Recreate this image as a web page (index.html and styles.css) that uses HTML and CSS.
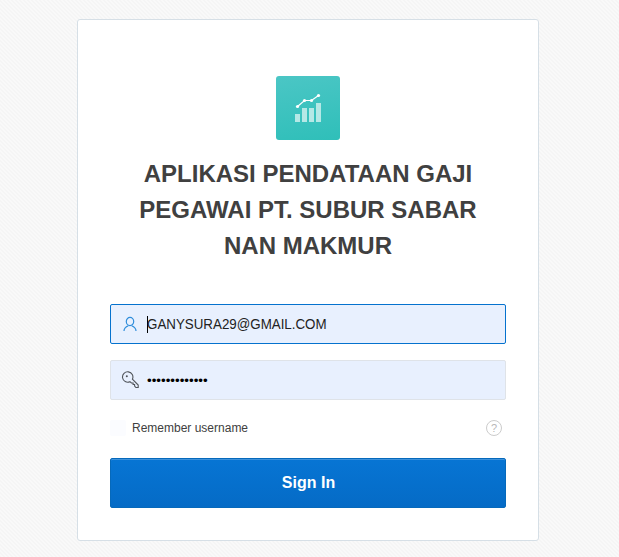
FILE: index.html
```html
<!DOCTYPE html>
<html lang="id">
<head>
<meta charset="utf-8">
<title>Sign In</title>
<link rel="stylesheet" href="styles.css">
</head>
<body>
<main class="card">
  <div class="logo">
    <svg width="64" height="64" viewBox="0 0 64 64">
      <g fill="#b5e8e6"><path d="M19 38h5v8h-5zM26 32h5v14h-5zM33 32h5v14h-5zM40 27h5v19h-5z"/></g>
      <path d="M21.5 30.5l7-6h7l7-5" fill="none" stroke="#fff" stroke-width="1.2"/>
      <g fill="#fff"><circle cx="21.5" cy="30.5" r="1.6"/><circle cx="28.5" cy="24.5" r="1.6"/><circle cx="35.5" cy="24.5" r="1.6"/><circle cx="42.5" cy="19.5" r="1.6"/></g>
    </svg>
  </div>
  <h1 class="title">APLIKASI PENDATAAN GAJI PEGAWAI PT. SUBUR SABAR NAN MAKMUR</h1>
  <form class="form">
    <div class="field field-active">
      <svg class="icon" width="18" height="16" viewBox="0 0 18 16" fill="none" stroke="#2f8ddb" stroke-width="1.2">
        <ellipse cx="9" cy="5.5" rx="3.7" ry="4.2"/>
        <path d="M3 15c0-2.8 1-4 4.3-5.3M15 15c0-2.8-1-4-4.3-5.3"/>
      </svg>
      <span class="caret"></span><span class="value email">GANYSURA29@GMAIL.COM</span>
    </div>
    <div class="field">
      <svg class="icon" width="18" height="18" viewBox="-.6 0 18 18" fill="none" stroke="#50545a" stroke-width="1.1">
        <path d="M10.8 8.2A5.2 5.2 0 1 0 8.3 10.7L9.8 12H11.5V13.5H13V15L14.3 16.5H16.6V14.1Z"/>
        <circle cx="5.2" cy="5.2" r="1" fill="#50545a" stroke="none"/>
      </svg>
      <span class="value dots">•••••••••••••</span>
    </div>
    <div class="options">
      <span class="check"></span>
      <span class="remember">Remember username</span>
      <span class="help">?</span>
    </div>
    <button class="submit" type="button">Sign In</button>
  </form>
</main>
</body>
</html>
```
FILE: styles.css
```css
* { box-sizing: border-box; }
body {
  margin: 0;
  height: 557px;
  padding-top: 19px;
  overflow: hidden;
  font-family: "Liberation Sans", Arial, sans-serif;
  color: #404040;
  background: repeating-linear-gradient(45deg, #f5f5f5 0 1.414px, #f9f9f9 1.414px 2.828px);
}
.card {
  width: 462px;
  height: 522px;
  margin-left: 77px;
  padding: 56px 32px 0;
  border: 1px solid #d6dfe6;
  border-radius: 3px;
  background: #fff;
}
.logo {
  width: 64px;
  height: 64px;
  margin: 0 auto;
  border-radius: 3px;
  background: linear-gradient(170deg, #4bc6c5, #2fbfb9);
}
.logo svg { display: block; }
.title {
  margin: 16px 16px 40px;
  font-size: 24px;
  line-height: 36px;
  font-weight: bold;
  text-align: center;
}
.form { display: flex; flex-direction: column; }
.field {
  display: flex;
  align-items: center;
  height: 40px;
  margin-bottom: 16px;
  padding-left: 10px;
  border: 1px solid #dfe3e8;
  border-radius: 2px;
  background: #e8f0fe;
}
.field-active { border-color: #0572ce; }
.icon { flex: none; }
.caret { width: 1px; height: 17px; margin-left: 8px; background: #000; }
.value { margin-left: -1px; font-size: 13.33px; line-height: 20px; color: #222; }
.email { font-size: 14px; transform: scaleX(.953); transform-origin: left; }
.dots { margin-left: 8px; padding-top: 1px; color: #000; }
.options { display: flex; align-items: center; height: 24px; font-size: 12px; }
.check { width: 16px; height: 16px; margin-right: 6px; border-radius: 2px; background: #fbfcff; }
.help {
  width: 16px;
  height: 16px;
  margin: 0 4px 0 auto;
  border: 1px solid #ccc;
  border-radius: 50%;
  font-size: 11px;
  line-height: 15px;
  text-align: center;
  color: #b8b8b8;
}
.submit {
  height: 50px;
  margin-top: 18px;
  padding: 0 0 0 1px;
  border: 1px solid #0669bb;
  border-radius: 2px;
  background: linear-gradient(#0775d4, #056bc6);
  box-shadow: inset 0 1px #3d92dc;
  font: bold 16px/20px "Liberation Sans", Arial, sans-serif;
  color: #fff;
}
```
